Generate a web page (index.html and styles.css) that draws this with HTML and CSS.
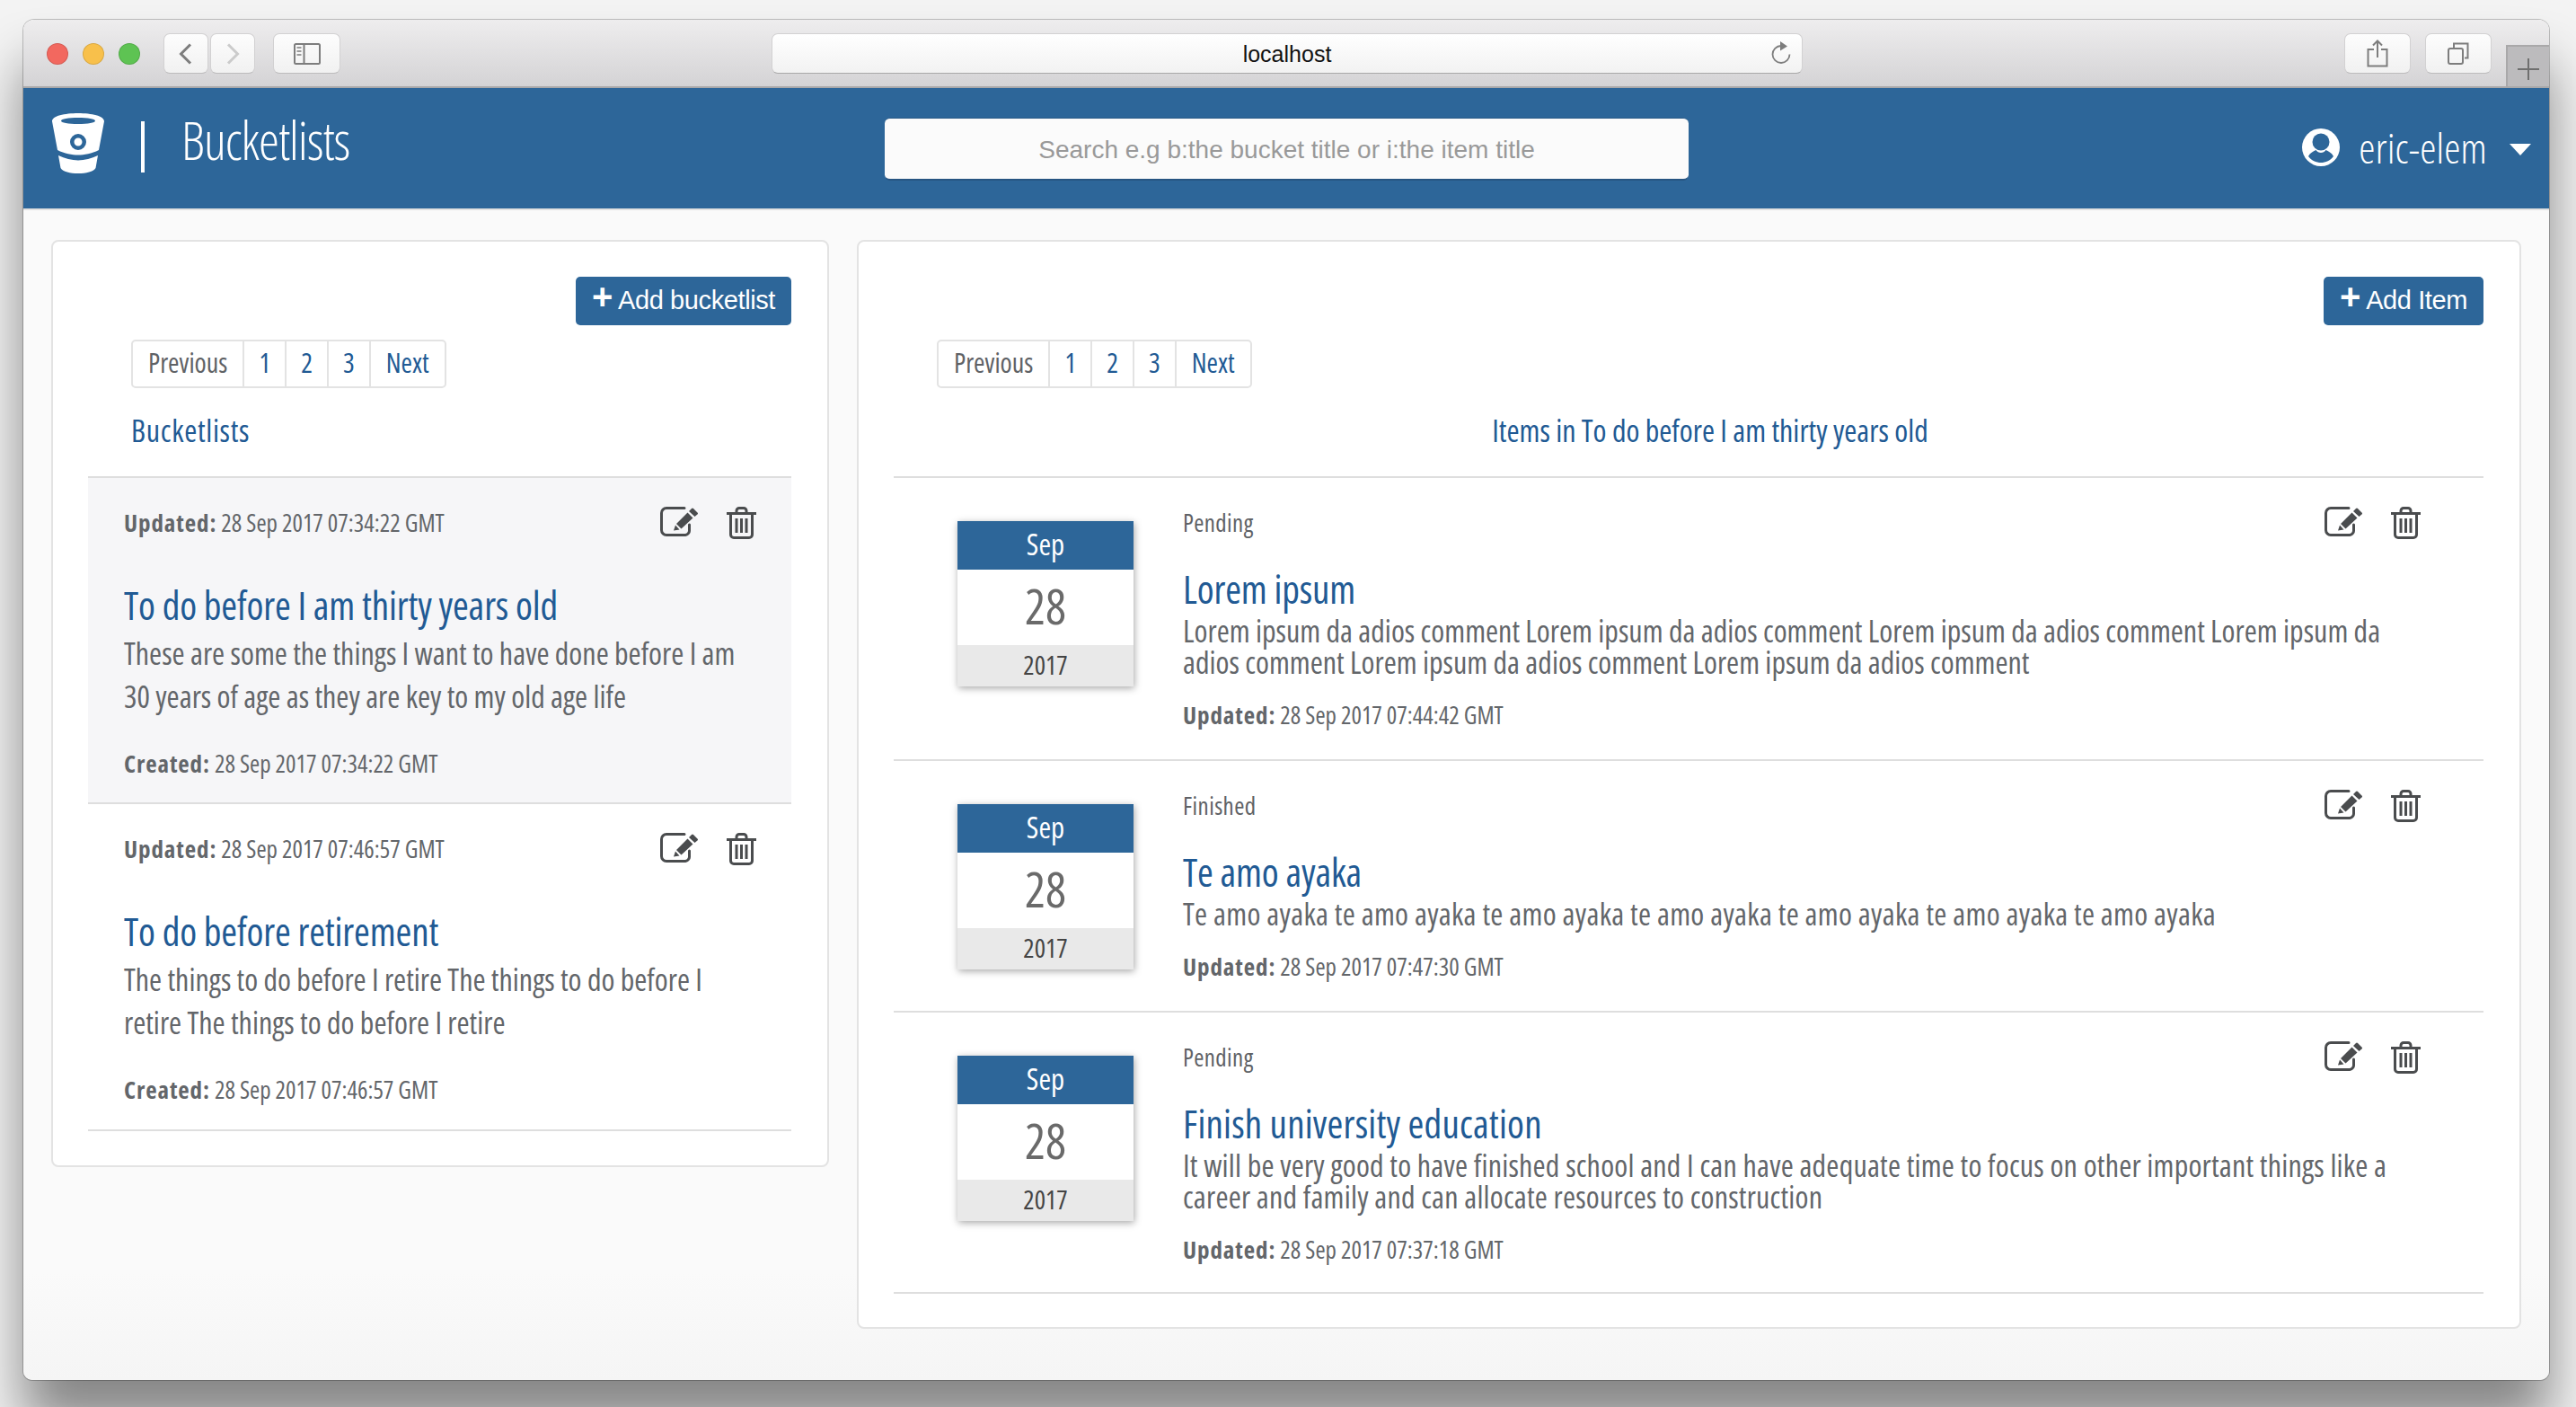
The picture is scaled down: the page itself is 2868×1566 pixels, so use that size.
FILE: index.html
```
<!DOCTYPE html>
<html lang="en">
<head>
<meta charset="utf-8">
<title>Bucketlists</title>
<link rel="stylesheet" href="styles.css">
</head>
<body>
<svg class="defs" width="0" height="0">
  <symbol id="i-edit" viewBox="0 0 42 33">
    <path d="M27 1.500H7A5.500 5.500 0 0 0 1.500 7V26A5.500 5.500 0 0 0 7 31.500H27A5 5 0 0 0 32.500 26V20" fill="none" stroke="currentColor" stroke-width="3" stroke-linecap="round"/>
    <path d="M15 26.500L17 20.500L21.500 25.500Z M18 19L30.500 6.500L36.500 12.500L23.500 24.500Z M32 5L35 2Q36 1 37 2L41.500 6.500Q42.500 7.500 41.500 8.500L38.500 11Z" fill="currentColor"/>
  </symbol>
  <symbol id="i-trash" viewBox="0 0 33 36">
    <path d="M0 7.500H33M11 7V4.500A3 3 0 0 1 14 1.500H19A3 3 0 0 1 22 4.500V7M4.500 8V31A3.500 3.500 0 0 0 8 34.500H25A3.500 3.500 0 0 0 28.500 31V8" fill="none" stroke="currentColor" stroke-width="3"/>
    <path d="M9.500 13h3v16h-3zM15 13h3v16h-3zM20.500 13h3v16h-3z" fill="currentColor"/>
  </symbol>
</svg>
<div class="window">
  <div class="titlebar">
    <div class="lights"><span class="light red"></span><span class="light yellow"></span><span class="light green"></span></div>
    <div class="navpair">
      <span class="tbtn nav"><svg width="16" height="24" viewBox="0 0 16 24"><path d="M13 1.500L2.500 12L13 22.500" fill="none" stroke="#7d7d7d" stroke-width="3"/></svg></span>
      <span class="tbtn nav"><svg width="16" height="24" viewBox="0 0 16 24"><path d="M3 1.500L13.500 12L3 22.500" fill="none" stroke="#cbcbcb" stroke-width="3"/></svg></span>
    </div>
    <span class="tbtn side"><svg width="30" height="24" viewBox="0 0 30 24"><rect x="1" y="1" width="28" height="22" rx="1.500" fill="none" stroke="#7d7d7d" stroke-width="2"/><path d="M11.500 1v22" stroke="#7d7d7d" stroke-width="2"/><path d="M3.500 5h5M3.500 9h5M3.500 13h5" stroke="#9a9a9a" stroke-width="2"/></svg></span>
    <div class="address"><span class="addr-text">localhost</span>
      <svg class="reload" width="24" height="26" viewBox="0 0 24 26"><path d="M12 5A9.500 9.500 0 1 0 21.500 14.500" fill="none" stroke="#7d7d7d" stroke-width="1.800"/><path d="M11 0L19 5.500L11 10.500Z" fill="#7d7d7d"/></svg>
    </div>
    <span class="tbtn tool"><svg width="24" height="31" viewBox="0 0 24 31"><path d="M8 11H1.500V29.500H22.500V11H16" fill="none" stroke="#7d7d7d" stroke-width="2"/><path d="M12 20V2M7 6.500L12 1.500L17 6.500" fill="none" stroke="#7d7d7d" stroke-width="2"/></svg></span>
    <span class="tbtn tool"><svg width="24" height="25" viewBox="0 0 24 25"><rect x="1" y="7" width="16" height="17" rx="2" fill="none" stroke="#7d7d7d" stroke-width="2"/><path d="M7 6.500V1.500H22.500V17.500H19" fill="none" stroke="#7d7d7d" stroke-width="2"/></svg></span>
    <span class="newtab"><svg width="24" height="24" viewBox="0 0 24 24"><path d="M12 0v24M0 12h24" stroke="#6f6f6f" stroke-width="2"/></svg></span>
  </div>
  <header class="topbar">
    <div class="brand">
      <svg class="logo" width="58" height="67" viewBox="0 0 58 67"><path fill-rule="evenodd" fill="#fff" d="M0 9C0 3 14 0 29 0C44 0 58 3 58 9L52 41C44 45 36 46.500 29 46.500C22 46.500 14 45 6 41ZM29 5C18 5 10 6.500 10 8.500C10 10.500 18 12 29 12C40 12 48 10.500 48 8.500C48 6.500 40 5 29 5ZM29 23A9 9 0 1 0 29 41A9 9 0 1 0 29 23ZM29 27.500A4.500 4.500 0 1 1 29 36.500A4.500 4.500 0 1 1 29 27.500Z"/><path fill="#fff" d="M7 47C14 50 22 52.500 29 52.500C36 52.500 44 50 51 47L48.500 61C46 65 38 67 29 67C20 67 12 65 9.500 61Z"/></svg>
      <span class="brand-rule"></span>
      <span class="brand-name">Bucketlists</span>
    </div>
    <input class="search" type="text" placeholder="Search e.g b:the bucket title or i:the item title">
    <div class="user">
      <svg class="user-icon" width="42" height="42" viewBox="0 0 42 42"><circle cx="21" cy="21" r="21" fill="#fff"/><circle cx="21" cy="15" r="9.500" fill="#2d6699"/><path d="M7 31C9 27 13 25 15.500 24C18 28 24 28 26.500 24C29 25 33 27 35 31C32 35.500 26 38 21 38C16 38 10 35.500 7 31Z" fill="#2d6699"/></svg>
      <span class="user-name">eric-elem</span>
      <span class="caret"></span>
    </div>
  </header>
  <main class="content">
    <section class="panel panel-left">
      <div class="panel-actions"><a class="btn"><span class="plus">+</span> Add bucketlist</a></div>
      <div class="pagination"><span class="pg muted">Previous</span><span class="pg num">1</span><span class="pg num">2</span><span class="pg num">3</span><span class="pg">Next</span></div>
      <h4 class="list-title">Bucketlists</h4>
      <ul class="list">
        <li class="bucket active">
          <div class="meta-row"><p class="meta"><b>Updated:</b> 28 Sep 2017 07:34:22 GMT</p><div class="icons"><svg class="ic-edit"><use href="#i-edit"/></svg><svg class="ic-trash"><use href="#i-trash"/></svg></div></div>
          <h3 class="b-title">To do before I am thirty years old</h3>
          <p class="b-desc">These are some the things I want to have done before I am 30 years of age as they are key to my old age life</p>
          <p class="meta"><b>Created:</b> 28 Sep 2017 07:34:22 GMT</p>
        </li>
        <li class="bucket">
          <div class="meta-row"><p class="meta"><b>Updated:</b> 28 Sep 2017 07:46:57 GMT</p><div class="icons"><svg class="ic-edit"><use href="#i-edit"/></svg><svg class="ic-trash"><use href="#i-trash"/></svg></div></div>
          <h3 class="b-title">To do before retirement</h3>
          <p class="b-desc">The things to do before I retire The things to do before I retire The things to do before I retire</p>
          <p class="meta"><b>Created:</b> 28 Sep 2017 07:46:57 GMT</p>
        </li>
      </ul>
    </section>
    <section class="panel panel-right">
      <div class="panel-actions"><a class="btn"><span class="plus">+</span> Add Item</a></div>
      <div class="pagination"><span class="pg muted">Previous</span><span class="pg num">1</span><span class="pg num">2</span><span class="pg num">3</span><span class="pg">Next</span></div>
      <h4 class="items-title">Items in To do before I am thirty years old</h4>
      <ul class="list">
        <li class="item">
          <div class="cal"><div class="cal-m">Sep</div><div class="cal-d">28</div><div class="cal-y">2017</div></div>
          <div class="item-body">
            <div class="meta-row item-top"><p class="status">Pending</p><div class="icons"><svg class="ic-edit"><use href="#i-edit"/></svg><svg class="ic-trash"><use href="#i-trash"/></svg></div></div>
            <h3 class="i-title">Lorem ipsum</h3>
            <p class="i-desc">Lorem ipsum da adios comment Lorem ipsum da adios comment Lorem ipsum da adios comment Lorem ipsum da adios comment Lorem ipsum da adios comment Lorem ipsum da adios comment</p>
            <p class="meta i-meta"><b>Updated:</b> 28 Sep 2017 07:44:42 GMT</p>
          </div>
        </li>
        <li class="item">
          <div class="cal"><div class="cal-m">Sep</div><div class="cal-d">28</div><div class="cal-y">2017</div></div>
          <div class="item-body">
            <div class="meta-row item-top"><p class="status">Finished</p><div class="icons"><svg class="ic-edit"><use href="#i-edit"/></svg><svg class="ic-trash"><use href="#i-trash"/></svg></div></div>
            <h3 class="i-title">Te amo ayaka</h3>
            <p class="i-desc roomy">Te amo ayaka te amo ayaka te amo ayaka te amo ayaka te amo ayaka te amo ayaka te amo ayaka</p>
            <p class="meta i-meta"><b>Updated:</b> 28 Sep 2017 07:47:30 GMT</p>
          </div>
        </li>
        <li class="item">
          <div class="cal"><div class="cal-m">Sep</div><div class="cal-d">28</div><div class="cal-y">2017</div></div>
          <div class="item-body">
            <div class="meta-row item-top"><p class="status">Pending</p><div class="icons"><svg class="ic-edit"><use href="#i-edit"/></svg><svg class="ic-trash"><use href="#i-trash"/></svg></div></div>
            <h3 class="i-title wide">Finish university education</h3>
            <p class="i-desc loose">It will be very good to have finished school and I can have adequate time to focus on other important things like a career and family and can allocate resources to construction</p>
            <p class="meta i-meta"><b>Updated:</b> 28 Sep 2017 07:37:18 GMT</p>
          </div>
        </li>
      </ul>
    </section>
  </main>
</div>
</body>
</html>
```
FILE: styles.css
```
* { box-sizing: border-box; }
html, body { margin: 0; height: 100%; }
body {
  background: #f3f3f3;
  padding: 22px 30px 0 26px;
  overflow: hidden;
  font-family: "Open Sans", sans-serif;
  font-stretch: 75%;
  color: #5f6266;
}
.defs { position: absolute; }
p, h3, h4, ul { margin: 0; padding: 0; font-weight: 400; list-style: none; }

.window {
  height: 1514px;
  background: linear-gradient(#fafafa 92%, #f5f5f5);
  border-radius: 12px 12px 10px 10px;
  box-shadow: 0 0 0 1px rgba(0,0,0,.22), 0 50px 60px rgba(0,0,0,.45);
  display: flex;
  flex-direction: column;
  overflow: hidden;
}

/* Safari chrome */
.titlebar {
  height: 76px;
  flex: none;
  background: linear-gradient(#eeedee, #d4d3d5);
  border-bottom: 2px solid #a9a8a9;
  display: flex;
  align-items: flex-start;
  padding: 15px 0 0 26px;
}
.lights { display: flex; gap: 16px; margin-top: 11px; }
.light { width: 24px; height: 24px; border-radius: 50%; border: 1px solid rgba(0,0,0,.12); }
.red { background: #f2685f; }
.yellow { background: #f8c04b; }
.green { background: #5ec353; }
.tbtn {
  height: 45px;
  background: linear-gradient(#fdfdfd, #f1f1f1);
  border: 1px solid #d2d1d2;
  border-bottom-color: #bcbbbc;
  border-radius: 7px;
  display: flex;
  align-items: center;
  justify-content: center;
}
.navpair { display: flex; gap: 2px; margin-left: 26px; }
.nav { width: 50px; }
.side { width: 75px; margin-left: 20px; }
.address {
  width: 1148px;
  height: 45px;
  margin: 0 auto 0 480px;
  background: linear-gradient(#fff, #f2f2f2);
  border: 1px solid #d2d1d2;
  border-bottom-color: #a8a8a8;
  border-radius: 7px;
  display: flex;
  align-items: center;
  justify-content: center;
  position: relative;
  padding-top: 2px;
}
.addr-text { font: 25px "Liberation Sans", sans-serif; color: #111; }
.reload { position: absolute; right: 11px; top: 8px; }
.tool { width: 74px; margin-left: 16px; }
.tool:first-of-type { margin-left: 0; }
.newtab {
  width: 48px;
  height: 46px;
  margin: 13px 0 0 16px;
  background: #bcbbbd;
  border-top: 2px solid #a9a8a9;
  border-left: 2px solid #a9a8a9;
  display: flex;
  align-items: center;
  justify-content: center;
  padding-top: 6px;
}

/* Header */
.topbar {
  height: 136px;
  flex: none;
  background: #2d6699;
  border-bottom: 2px solid #e1e1e1;
  display: flex;
  align-items: flex-start;
  position: relative;
  color: #fff;
}
.brand { display: flex; align-items: flex-start; width: 959px; padding: 28px 0 0 32px; }
.brand-rule { width: 4px; height: 57px; margin: 9px 0 0 41px; background: #fff; }
.brand-name { font-size: 58px; line-height: 58px; font-weight: 300; margin: 1px 0 0 41px; letter-spacing: -1px; }
.search {
  width: 895px;
  height: 70px;
  margin-top: 33px;
  background: #fbfbfb;
  border: 0;
  border-top: 1px solid #2a5a87;
  border-bottom: 2px solid #275582;
  border-radius: 6px;
  text-align: center;
  font: 28px "Liberation Sans", sans-serif;
  padding: 2px 0 0;
}
.search::placeholder { color: #999; opacity: 1; }
.user { display: flex; align-items: center; margin: 45px 0 0 auto; padding-right: 20px; height: 42px; }
.user-name { font-size: 46px; font-weight: 300; letter-spacing: .2px; margin-left: 21px; line-height: 42px; }
.caret { width: 0; height: 0; margin-left: 25px; margin-top: 4px; border: 12px solid transparent; border-top: 13px solid #fff; border-bottom: 0; }

/* Content */
.content { flex: 1; display: flex; align-items: flex-start; gap: 31px; padding: 33px 31px 0 31px; }
.panel {
  background: #fff;
  border: 2px solid #e3e3e3;
  border-radius: 8px;
}
.panel-left { width: 866px; height: 1032px; padding: 39px 40px 0 39px; }
.panel-right { width: 1853px; height: 1212px; padding: 39px 40px 0 39px; }
.panel-actions { display: flex; justify-content: flex-end; }
.btn {
  height: 54px;
  padding: 0 18px;
  background: #2d6699;
  color: #fff;
  border-radius: 5px;
  font: 29px/52px "Liberation Sans", sans-serif;
  letter-spacing: -.4px;
  white-space: nowrap;
}
.plus { font-weight: 700; font-size: 40px; line-height: 30px; }
.pagination {
  display: inline-flex;
  height: 54px;
  margin: 16px 0 0 48px;
  border: 2px solid #e3e3e3;
  border-radius: 5px;
  font-size: 30px;
  color: #215a94;
  vertical-align: top;
}
.pg {
  padding: 0 17px;
  line-height: 48px;
  border-left: 2px solid #e3e3e3;
}
.pg:first-child { border-left: 0; }
.num { padding: 0 16px; }
.muted { color: #5f6266; }
.list-title {
  margin: 0 0 0 48px;
  padding-top: 22px;
  font-size: 34px;
  letter-spacing: .7px;
  line-height: 50px;
  height: 98px;
  color: #215a94;
}
.items-title {
  padding: 22px 0 0 48px;
  font-size: 34px;
  line-height: 50px;
  height: 98px;
  color: #215a94;
  text-align: center;
}
.list { border-top: 2px solid #dedede; }

.bucket { padding: 32px 40px 0; border-bottom: 2px solid #dedede; height: 363px; }
.bucket + .bucket { height: 364px; }
.active { background: #f6f6f8; }
.meta-row { display: flex; justify-content: space-between; align-items: center; height: 36px; }
.meta { font-size: 27px; line-height: 36px; color: #63666a; }
.meta b { font-weight: 700; letter-spacing: .9px; }
.icons { display: flex; gap: 32px; color: #4a4c4e; margin-right: -1px; }
.ic-edit { width: 42px; height: 33px; }
.ic-trash { width: 33px; height: 36px; }
.b-title { font-size: 43px; letter-spacing: -.15px; line-height: 56px; margin-top: 46px; color: #215a94; }
.b-desc { font-size: 34px; line-height: 48px; margin: 1px 0 33px; color: #63666a; }

.item { display: flex; padding-left: 71px; border-bottom: 2px solid #dedede; }
.item:nth-child(1) { height: 315px; }
.item:nth-child(2) { height: 280px; }
.item:nth-child(3) { height: 313px; }
.cal {
  width: 196px;
  height: 184px;
  margin-top: 48px;
  flex: none;
  box-shadow: 1px 2px 8px rgba(0,0,0,.35);
  text-align: center;
}
.cal-m { height: 54px; background: #2d6699; color: #fff; font-size: 33px; line-height: 52px; }
.cal-d { height: 84px; background: #fff; font-size: 54px; line-height: 80px; color: #6a6a6a; }
.cal-y { height: 46px; background: #e9e9e9; font-size: 29px; line-height: 44px; color: #444; }
.item-body { margin-left: 55px; flex: 1; padding-right: 71px; }
.item-top { margin-top: 32px; }
.status { font-size: 27px; line-height: 36px; letter-spacing: .4px; }
.i-title { font-size: 43px; letter-spacing: -.15px; line-height: 52px; margin-top: 30px; color: #215a94; }
.i-title.wide { letter-spacing: .2px; }
.i-desc { font-size: 34px; line-height: 35px; margin-top: 3px; color: #63666a; }
.i-desc.roomy { letter-spacing: .28px; }
.i-desc.loose { letter-spacing: .2px; }
.i-meta { margin-top: 23px; }
```
